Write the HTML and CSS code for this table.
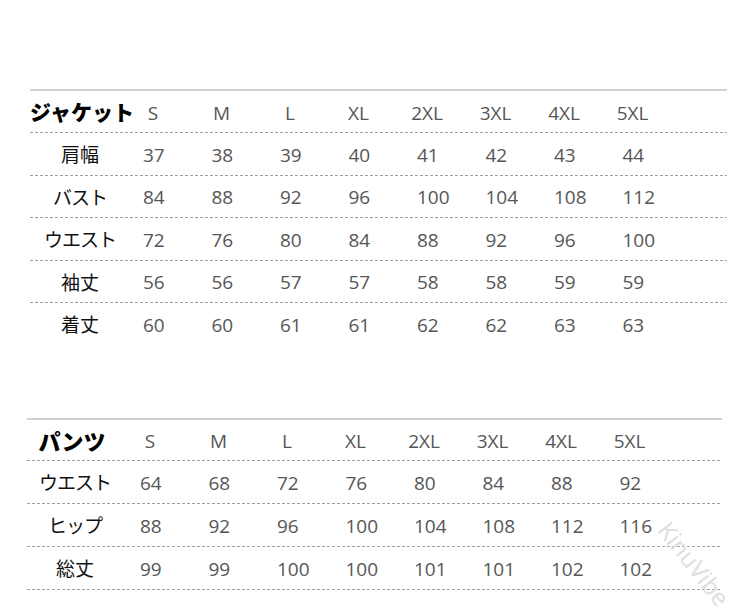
FILE: index.html
```html
<!DOCTYPE html>
<html lang="ja">
<head>
<meta charset="utf-8">
<title>サイズ表</title>
<link rel="stylesheet" href="styles.css">
</head>
<body>
<div class="page">
  <section class="table jacket">
    <div class="row head">
      <div class="label title">ジャケット</div>
      <div class="cell"><span class="sz">S</span></div>
      <div class="cell"><span class="sz">M</span></div>
      <div class="cell"><span class="sz">L</span></div>
      <div class="cell"><span class="sz">XL</span></div>
      <div class="cell"><span class="sz">2XL</span></div>
      <div class="cell"><span class="sz">3XL</span></div>
      <div class="cell"><span class="sz">4XL</span></div>
      <div class="cell"><span class="sz">5XL</span></div>
    </div>
    <div class="row">
      <div class="label">肩幅</div>
      <div class="cell">37</div><div class="cell">38</div><div class="cell">39</div><div class="cell">40</div>
      <div class="cell">41</div><div class="cell">42</div><div class="cell">43</div><div class="cell">44</div>
    </div>
    <div class="row">
      <div class="label kana">バスト</div>
      <div class="cell">84</div><div class="cell">88</div><div class="cell">92</div><div class="cell">96</div>
      <div class="cell">100</div><div class="cell">104</div><div class="cell">108</div><div class="cell">112</div>
    </div>
    <div class="row">
      <div class="label kana">ウエスト</div>
      <div class="cell">72</div><div class="cell">76</div><div class="cell">80</div><div class="cell">84</div>
      <div class="cell">88</div><div class="cell">92</div><div class="cell">96</div><div class="cell">100</div>
    </div>
    <div class="row">
      <div class="label">袖丈</div>
      <div class="cell">56</div><div class="cell">56</div><div class="cell">57</div><div class="cell">57</div>
      <div class="cell">58</div><div class="cell">58</div><div class="cell">59</div><div class="cell">59</div>
    </div>
    <div class="row last">
      <div class="label">着丈</div>
      <div class="cell">60</div><div class="cell">60</div><div class="cell">61</div><div class="cell">61</div>
      <div class="cell">62</div><div class="cell">62</div><div class="cell">63</div><div class="cell">63</div>
    </div>
  </section>

  <section class="table pants">
    <div class="row head">
      <div class="label title">パンツ</div>
      <div class="cell"><span class="sz">S</span></div>
      <div class="cell"><span class="sz">M</span></div>
      <div class="cell"><span class="sz">L</span></div>
      <div class="cell"><span class="sz">XL</span></div>
      <div class="cell"><span class="sz">2XL</span></div>
      <div class="cell"><span class="sz">3XL</span></div>
      <div class="cell"><span class="sz">4XL</span></div>
      <div class="cell"><span class="sz">5XL</span></div>
    </div>
    <div class="row">
      <div class="label kana">ウエスト</div>
      <div class="cell">64</div><div class="cell">68</div><div class="cell">72</div><div class="cell">76</div>
      <div class="cell">80</div><div class="cell">84</div><div class="cell">88</div><div class="cell">92</div>
    </div>
    <div class="row">
      <div class="label kana">ヒップ</div>
      <div class="cell">88</div><div class="cell">92</div><div class="cell">96</div><div class="cell">100</div>
      <div class="cell">104</div><div class="cell">108</div><div class="cell">112</div><div class="cell">116</div>
    </div>
    <div class="row">
      <div class="label">総丈</div>
      <div class="cell">99</div><div class="cell">99</div><div class="cell">100</div><div class="cell">100</div>
      <div class="cell">101</div><div class="cell">101</div><div class="cell">102</div><div class="cell">102</div>
    </div>
  </section>

  <div class="watermark">KinuVibe</div>
</div>
</body>
</html>
```

FILE: styles.css
```css
html, body {
  margin: 0;
  padding: 0;
  background: #ffffff;
}

.page {
  position: relative;
  width: 748px;
  height: 616px;
  overflow: hidden;
  padding-top: 89px;
  box-sizing: border-box;
}

.table {
  border-top: 2px solid #d2d2d2;
}

.jacket {
  margin-left: 30px;
  width: 697px;
}

.pants {
  margin-left: 27px;
  width: 695px;
  margin-top: 72px;
}

.row {
  display: grid;
  grid-template-columns: 100px 13px repeat(8, 68.5px) 1fr;
  align-items: center;
  height: 41.5px;
  background-image: repeating-linear-gradient(90deg, #a0a0a0 0 3px, transparent 3px 5px);
  background-size: 100% 1px;
  background-position: left bottom;
  background-repeat: no-repeat;
  padding-bottom: 1px;
}

.row.head {
  height: 41px;
}

.pants .row.head {
  height: 40px;
}

.pants .row {
  height: 42px;
}

.row.last {
  background-image: none;
}

.label {
  grid-column: 1;
  text-align: center;
  white-space: nowrap;
  font-family: "Noto Sans CJK JP", sans-serif;
  font-size: 19px;
  color: #111111;
  line-height: 1;
}

.label.kana {
  letter-spacing: -1px;
}

.label.title {
  font-weight: 900;
  font-size: 21px;
  letter-spacing: 0;
  color: #000000;
}

.pants .label.title {
  font-size: 22px;
  margin-left: -10px;
}

.pants .label:not(.title) {
  margin-left: -4px;
}

.cell {
  font-family: "Open Sans", sans-serif;
  font-size: 19px;
  color: #565656;
  line-height: 1;
  white-space: nowrap;
  padding-top: 3px;
}

.label + .cell {
  grid-column: 3;
}

.sz {
  display: inline-flex;
  justify-content: center;
  width: 20px;
}

.watermark {
  position: absolute;
  left: 645px;
  top: 547px;
  font-family: "Open Sans", sans-serif;
  font-size: 24px;
  color: #dedede;
  transform: rotate(52deg);
  transform-origin: center;
  white-space: nowrap;
}
```
